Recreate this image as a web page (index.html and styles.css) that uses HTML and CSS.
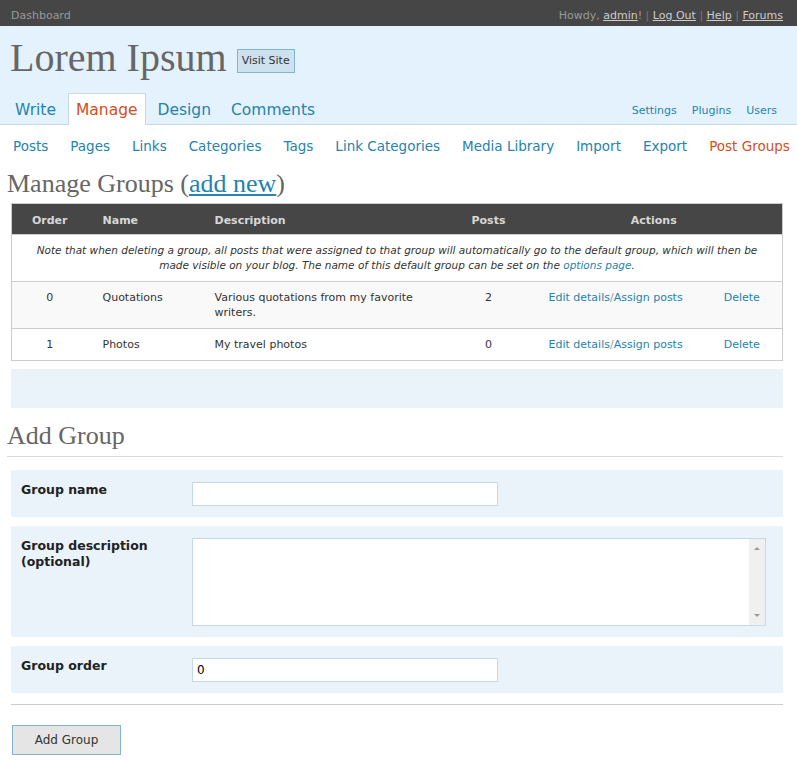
FILE: index.html
```html
<!DOCTYPE html>
<html lang="en">
<head>
    <meta charset="UTF-8">
    <title>Manage Groups</title>
    <link rel="stylesheet" href="styles.css">
</head>
<body>
<div class="topbar">
    <span>Dashboard</span>
    <span>Howdy, <a href="#">admin</a>! <span class="sep">|</span> <a href="#">Log Out</a> <span class="sep">|</span> <a href="#">Help</a> <span class="sep">|</span> <a href="#">Forums</a></span>
</div>
<div class="head">
    <div class="site">
        <h1>Lorem Ipsum</h1>
        <a class="visit" href="#">Visit Site</a>
    </div>
    <div class="menus">
        <ul class="tabs">
            <li><a href="#">Write</a></li>
            <li class="on"><a href="#">Manage</a></li>
            <li><a href="#">Design</a></li>
            <li><a href="#">Comments</a></li>
        </ul>
        <ul class="side">
            <li><a href="#">Settings</a></li>
            <li><a href="#">Plugins</a></li>
            <li><a href="#">Users</a></li>
        </ul>
    </div>
</div>
<ul class="submenu">
    <li><a href="#">Posts</a></li>
    <li><a href="#">Pages</a></li>
    <li><a href="#">Links</a></li>
    <li><a href="#">Categories</a></li>
    <li><a href="#">Tags</a></li>
    <li><a href="#">Link Categories</a></li>
    <li><a href="#">Media Library</a></li>
    <li><a href="#">Import</a></li>
    <li><a href="#">Export</a></li>
    <li class="on"><a href="#">Post Groups</a></li>
</ul>
<div class="wrap">
    <h2>Manage Groups (<a href="#">add new</a>)</h2>
    <table class="groups">
        <colgroup>
            <col class="c1"><col class="c2"><col class="c3"><col class="c4"><col class="c5"><col class="c6">
        </colgroup>
        <thead>
        <tr>
            <th class="mid">Order</th>
            <th class="name">Name</th>
            <th class="desc">Description</th>
            <th class="mid">Posts</th>
            <th class="actions" colspan="2">Actions</th>
        </tr>
        </thead>
        <tbody>
        <tr>
            <td class="note" colspan="6">Note that when deleting a group, all posts that were assigned to that group will automatically go to the default group, which will then be made visible on your blog. The name of this default group can be set on the <a href="#">options page</a>.</td>
        </tr>
        <tr class="alt">
            <td class="mid">0</td>
            <td class="name">Quotations</td>
            <td class="desc">Various quotations from my favorite writers.</td>
            <td class="mid">2</td>
            <td class="edit"><a href="#">Edit details</a><span class="slash">/</span><a href="#">Assign posts</a></td>
            <td class="mid"><a href="#">Delete</a></td>
        </tr>
        <tr>
            <td class="mid">1</td>
            <td class="name">Photos</td>
            <td class="desc">My travel photos</td>
            <td class="mid">0</td>
            <td class="edit"><a href="#">Edit details</a><span class="slash">/</span><a href="#">Assign posts</a></td>
            <td class="mid"><a href="#">Delete</a></td>
        </tr>
        </tbody>
    </table>
    <div class="tablenav"></div>

    <h3>Add Group</h3>
    <div class="form">
        <div class="row">
            <label>Group name</label>
            <input type="text" value="">
        </div>
        <div class="row">
            <label>Group description (optional)</label>
            <div class="area">
                <textarea></textarea>
                <div class="scroll"><span class="up"></span><span class="down"></span></div>
            </div>
        </div>
        <div class="row">
            <label>Group order</label>
            <input type="text" value="0">
        </div>
    </div>
    <div class="submit">
        <button type="button">Add Group</button>
    </div>
</div>
</body>
</html>
```

FILE: styles.css
```css
*{
    margin:0;
    padding:0;
}
ul{
    list-style: none;
}
body{
    font-family: "DejaVu Sans", Verdana, sans-serif;
    font-size: 11px;
    color: #333;
    background: #fff;
}
a{
    color: #2583ad;
    text-decoration: none;
}

/* top bar */
.topbar{
    height: 26px;
    box-sizing: border-box;
    padding: 6px 14px 0 11px;
    line-height: 20px;
    background: #464646;
    color: #999;
    display: flex;
    justify-content: space-between;
}
.topbar a{
    color: #ccc;
    text-decoration: underline;
}
.topbar .sep{
    color: #777;
}

/* header */
.head{
    background: #e4f2fd;
    border-bottom: 1px solid #c6d9e9;
    padding: 9px 14px 0 7px;
}
.site{
    display: flex;
    align-items: flex-start;
}
.site h1{
    font: normal 40px/46px "Liberation Serif", serif;
    color: #666;
    margin-left: 3px;
}
.visit{
    margin: 14px 0 0 10px;
    padding: 0 4px;
    line-height: 22px;
    font-size: 11px;
    color: #333;
    background: #cee1ef;
    border: 1px solid #80b5d0;
}
.menus{
    display: flex;
    justify-content: space-between;
    align-items: flex-end;
}
.tabs{
    display: flex;
    margin-top: 12px;
}
.tabs li{
    margin-right: 4px;
    margin-bottom: -1px;
}
.tabs a{
    display: block;
    padding: 1px 7px 0;
    line-height: 30px;
    font-size: 15.5px;
    border: 1px solid transparent;
    border-bottom: 0;
}
.tabs li.on a{
    background: #fff;
    border-color: #c6d9e9;
    color: #d54e21;
}
.side{
    display: flex;
    gap: 15px;
    margin-right: 6px;
    padding-bottom: 5px;
    line-height: 16px;
    font-size: 11px;
}

/* sub menu */
.submenu{
    display: flex;
    padding: 11px 0 0 13px;
    font-size: 13.5px;
    line-height: 20px;
    white-space: nowrap;
}
.submenu li{
    margin-right: 22px;
}
.submenu li.on a{
    color: #d54e21;
}

/* content */
.wrap{
    padding: 0 14px 0 7px;
}
.wrap h2{
    font: normal 26px/30px "Liberation Serif", serif;
    color: #666;
    margin-top: 13px;
}
.wrap h2 a{
    text-decoration: underline;
}
.groups{
    width: calc(100% - 4px);
    margin: 4px 0 0 4px;
    border-collapse: collapse;
    border: 1px solid #ccc;
    table-layout: fixed;
}
.groups .c1{ width: 76px; }
.groups .c2{ width: 115px; }
.groups .c3{ width: 231px; }
.groups .c4{ width: 110px; }
.groups .c5{ width: 158px; }
.groups th{
    background: #464646;
    color: #d7d7d7;
    height: 31px;
    padding-top: 2px;
    box-sizing: border-box;
    font-weight: bold;
    text-align: left;
}
.groups td{
    padding: 8px 0;
    line-height: 15px;
    vertical-align: top;
    border-top: 1px solid #ccc;
}
.groups .mid{
    text-align: center;
}
.groups .name{
    padding-left: 15px;
}
.groups .desc{
    padding-left: 12px;
    padding-right: 6px;
}
.groups th.actions{
    text-align: center;
    padding-right: 18px;
}
.groups .edit{
    padding-left: 5px;
    white-space: nowrap;
}
.groups .slash{
    color: #999;
}
.groups td.note{
    text-align: center;
    font-style: italic;
    font-size: 10.5px;
    padding: 8px 20px;
}
.groups tr.alt td{
    background: #f9f9f9;
}
.tablenav{
    height: 39px;
    margin: 8px 0 0 4px;
    background: #eaf2fa;
}
.wrap h3{
    font: normal 26px/30px "Liberation Serif", serif;
    color: #666;
    margin-top: 13px;
    padding-bottom: 5px;
    border-bottom: 1px solid #dadada;
}

/* form */
.form{
    margin: 13px 0 0 4px;
    display: flex;
    flex-direction: column;
    gap: 9px;
}
.row{
    display: flex;
    align-items: flex-start;
    padding: 12px 10px 11px;
    background: #eaf2fa;
}
.row label{
    width: 171px;
    flex-shrink: 0;
    font-weight: bold;
    font-size: 12.5px;
    line-height: 16px;
    color: #222;
}
.row input{
    width: 306px;
    height: 24px;
    box-sizing: border-box;
    border: 1px solid #c6d9e9;
    padding: 0 4px;
    font: 12px "DejaVu Sans", sans-serif;
    color: #000;
}
.area{
    width: 574px;
    height: 88px;
    box-sizing: border-box;
    border: 1px solid #c6d9e9;
    background: #fff;
    display: flex;
}
.area textarea{
    flex: 1;
    border: 0;
    resize: none;
    outline: none;
}
.scroll{
    width: 16px;
    padding: 8px 0;
    background: #f0f0f0;
    display: flex;
    flex-direction: column;
    justify-content: space-between;
    align-items: center;
}
.scroll .up{
    border-left: 3px solid transparent;
    border-right: 3px solid transparent;
    border-bottom: 3px solid #999;
}
.scroll .down{
    border-left: 3px solid transparent;
    border-right: 3px solid transparent;
    border-top: 3px solid #999;
}
.submit{
    margin: 11px 0 0 4px;
    padding-top: 20px;
    border-top: 1px solid #ccc;
}
.submit button{
    margin-left: 1px;
    width: 109px;
    height: 30px;
    background: #e5e5e5;
    border: 1px solid #80b5d0;
    font: 12px "DejaVu Sans", sans-serif;
    color: #333;
}
```
